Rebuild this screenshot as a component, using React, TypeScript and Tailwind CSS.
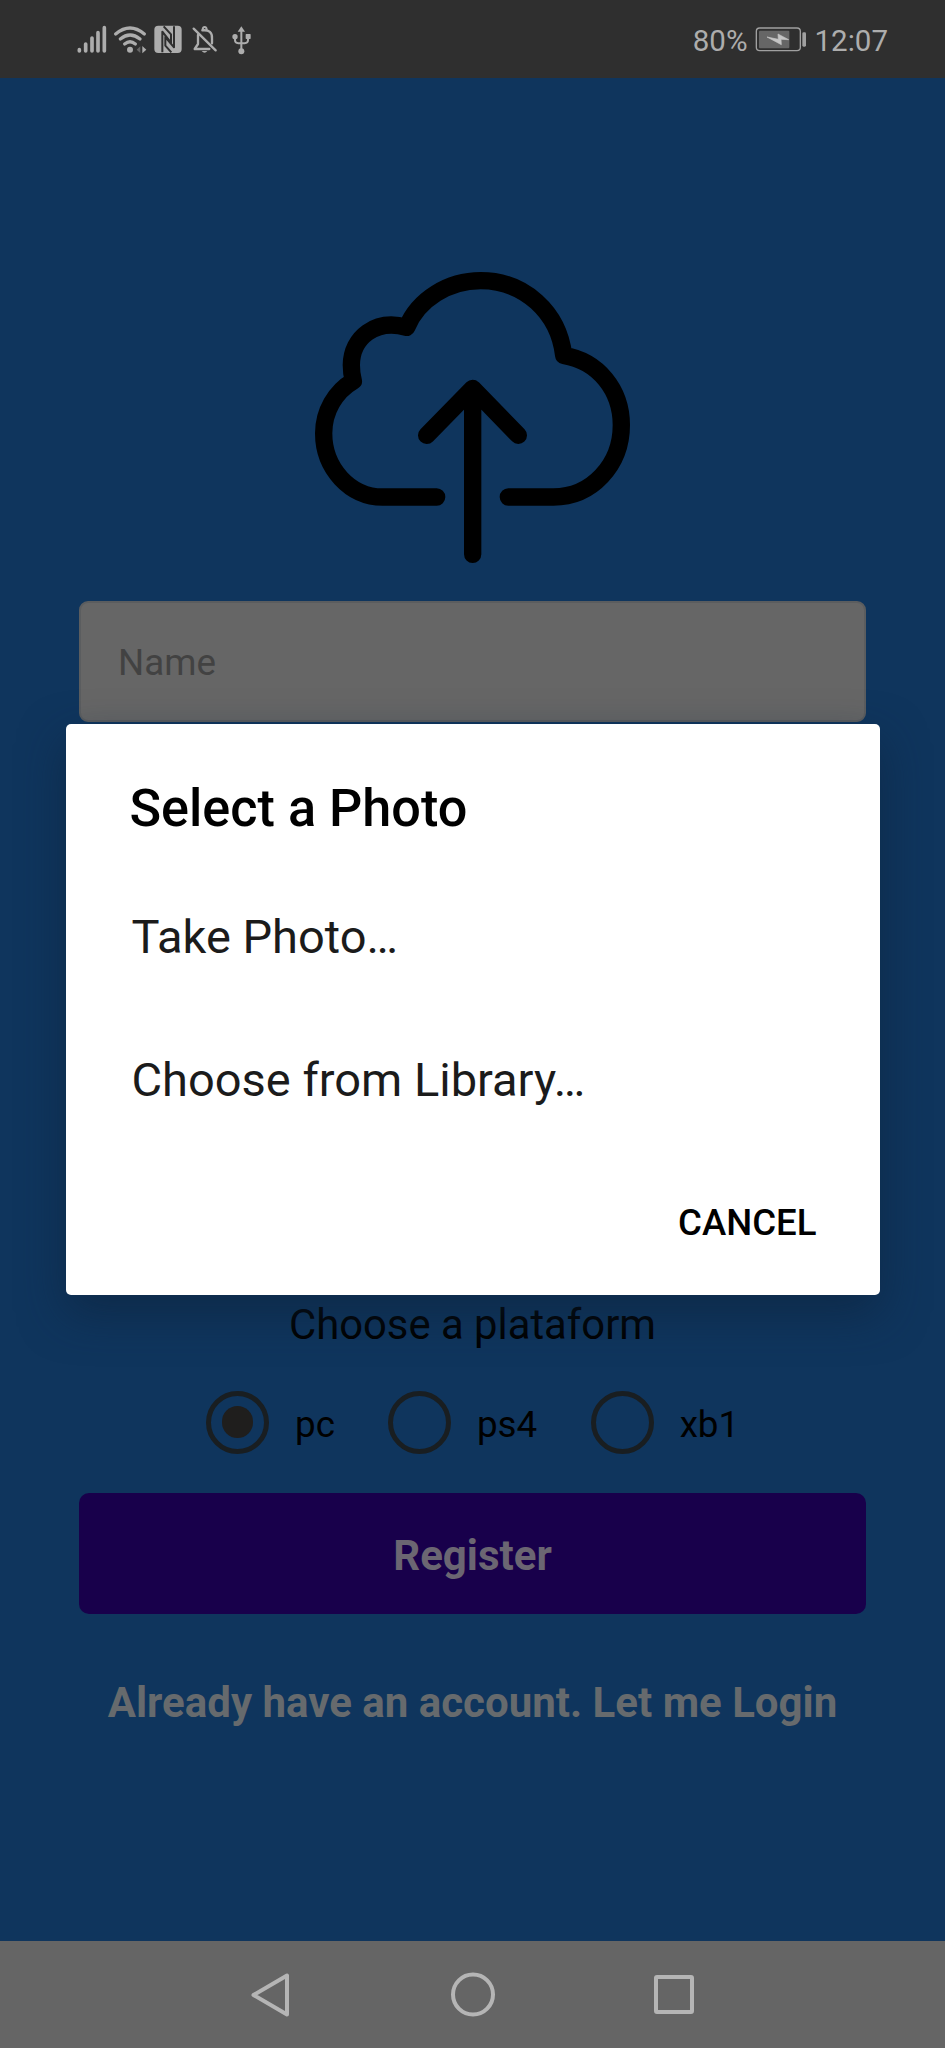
import React from 'react';

function StatusIcons() {
  return (
    <svg className="h-[78px] w-[220px]" viewBox="0 0 660 234" fill="none" stroke="#adadad">
      <g strokeWidth="11" strokeLinecap="round">
        <path d="M58 149V153M77 132V153M96 114V153M114 98V153M133 83V153" />
      </g>
      <g strokeWidth="10" strokeLinecap="round">
        <path d="M167 102Q210 66 253 102" />
        <path d="M181 117Q210 93 240 117" />
        <path d="M194 132Q210 119 226 132" />
      </g>
      <circle cx="210" cy="149" r="9" fill="#adadad" stroke="none" />
      <path d="M241 139V159L230 149Z" fill="#666" stroke="none" />
      <path d="M247 138V160L259 149Z" fill="#adadad" stroke="none" />
      <rect x="283" y="77" width="82" height="82" rx="12" fill="#adadad" stroke="none" />
      <g stroke="#2f2f2f" strokeWidth="6" strokeLinejoin="round">
        <path d="M307 157V95L333 128V103L311 79" />
        <path d="M342 79V142L316 111V137L334 157" />
      </g>
      <g strokeWidth="7" strokeLinecap="round" strokeLinejoin="round">
        <path d="M414 105V132L404 147H448" />
        <path d="M427 91Q458 88 456 116V130" />
        <path d="M428 88Q429 81 434 81Q439 81 440 88" strokeWidth="6" />
        <path d="M401 86L467 151" />
      </g>
      <path d="M425 153H442Q434 163 425 153Z" fill="#adadad" stroke="none" />
      <g strokeWidth="6" strokeLinejoin="round">
        <path d="M544 92V150M525 112V121Q525 129 535 130H554Q564 129 564 121V112" />
      </g>
      <g fill="#adadad" stroke="none">
        <path d="M544 79L555 95H533Z" />
        <circle cx="525" cy="110" r="8" />
        <rect x="557" y="102" width="15" height="15" rx="2" />
        <circle cx="544" cy="154" r="9" />
      </g>
    </svg>
  );
}

function BatteryIcon() {
  return (
    <svg className="h-[26px] w-[52px]" viewBox="0 0 156 78">
      <rect x="4" y="6" width="132" height="68" rx="10" fill="none" stroke="#a0a0a0" strokeWidth="4" />
      <rect x="12" y="14" width="91" height="53" rx="3" fill="#666" />
      <path d="M36 33L70 40L69 24L101 41L78 40L79 56Z" fill="#c4c4c4" stroke="#c4c4c4" strokeWidth="2" />
      <rect x="142" y="19" width="11" height="43" rx="4" fill="#a0a0a0" />
    </svg>
  );
}

function CloudUpload() {
  return (
    <svg
      className="h-[330px] w-[360px]"
      viewBox="0 0 1080 990"
      fill="none"
      stroke="#000"
      strokeWidth="52"
      strokeLinecap="round"
      strokeLinejoin="round"
    >
      <path d="M655 741H790C905 741 994 645 994 525C994 420 925 333 821 316C806 187 703 92 572 92C475 92 385 148 350 232C257 206 185 262 184 345Q184 370 190 393C135 425 101 485 101 550C101 655 180 741 278 741H440" />
      <path d="M548 415V913M410 556L548 415L685 556" />
    </svg>
  );
}

function Radio({ label, checked = false }: { label: string; checked?: boolean }) {
  return (
    <label className="flex h-[84px] items-center">
      <span className="flex size-[63px] items-center justify-center rounded-full border-[5.5px] border-[#191e21]">
        {checked && <span className="size-[31.5px] rounded-full bg-[#1f1e1d]" />}
      </span>
      <span className="ml-[26px] mt-[5px] text-[36.75px] leading-[44px] text-black">{label}</span>
    </label>
  );
}

export default function App() {
  return (
    <div className="relative flex h-[2048px] w-[945px] flex-col overflow-hidden bg-[#0f355d] font-['Roboto',sans-serif]">
      <header className="flex h-[78px] shrink-0 items-center justify-between bg-[#2f2f2f] pl-[60px] pr-[57px] text-[#adadad]">
        <StatusIcons />
        <div className="flex items-center text-[29.5px] leading-[36px]">
          <span className="mt-[3px]">80%</span>
          <span className="ml-[7px] flex">
            <BatteryIcon />
          </span>
          <span className="ml-[8px] mt-[3px]">12:07</span>
        </div>
      </header>

      <main className="flex flex-1 flex-col px-[79px] pt-[172px]">
        <div className="flex h-[351px] justify-center pr-[5px]">
          <CloudUpload />
        </div>
        <div className="flex h-[121px] items-center rounded-[9px] border-2 border-[#5b5d5f] bg-[#666] pl-[37px] pt-[2px] text-[36.75px] text-[#424242]">
          Name
        </div>
        <p className="mt-[578px] text-center text-[41.8px] leading-[50px] text-black">Choose a plataform</p>
        <div className="mt-[30px] flex pl-[127px]">
          <Radio label="pc" checked />
          <span className="w-[53px]" />
          <Radio label="ps4" />
          <span className="w-[53.5px]" />
          <Radio label="xb1" />
        </div>
        <button className="mt-[29px] h-[121px] rounded-[10px] bg-[#18004b] pt-[5px] text-[42px] font-bold leading-[50px] text-[#6b6672]">
          Register
        </button>
        <p className="mt-[64px] whitespace-nowrap text-center text-[42px] font-bold leading-[50px] text-[#666a6d]">
          Already have an account. Let me Login
        </p>
      </main>

      <nav className="flex h-[107px] shrink-0 items-start justify-center bg-[#656565]">
        <svg className="h-[106px] w-[540px]" viewBox="0 0 540 106" fill="none" stroke="#b5b5b5" strokeWidth="4" strokeLinejoin="round">
          <path d="M84 34.5V73.5L50.500 54Z" />
          <circle cx="270" cy="53.500" r="20" />
          <rect x="453" y="36" width="36" height="35" rx="1" />
        </svg>
      </nav>

      <div className="absolute inset-0 flex items-start justify-center pt-[723.5px]">
        <section className="flex h-[571.5px] w-[814px] flex-col rounded-[5px] bg-white px-[63px] shadow-[0_18px_45px_rgba(14,35,60,0.6)]">
          <h1 className="ml-[1px] mt-[54px] text-[52.2px] font-medium leading-[62px] text-black">Select a Photo</h1>
          <p className="mt-[69px] pl-[3px] text-[47px] leading-[56px] text-[#1b1b1b]">Take Photo…</p>
          <p className="mt-[87px] pl-[3px] text-[47px] leading-[56px] text-[#1b1b1b]">Choose from Library…</p>
          <button className="mt-[93px] self-end text-[36.6px] font-medium leading-[44px] text-black">CANCEL</button>
        </section>
      </div>
    </div>
  );
}
